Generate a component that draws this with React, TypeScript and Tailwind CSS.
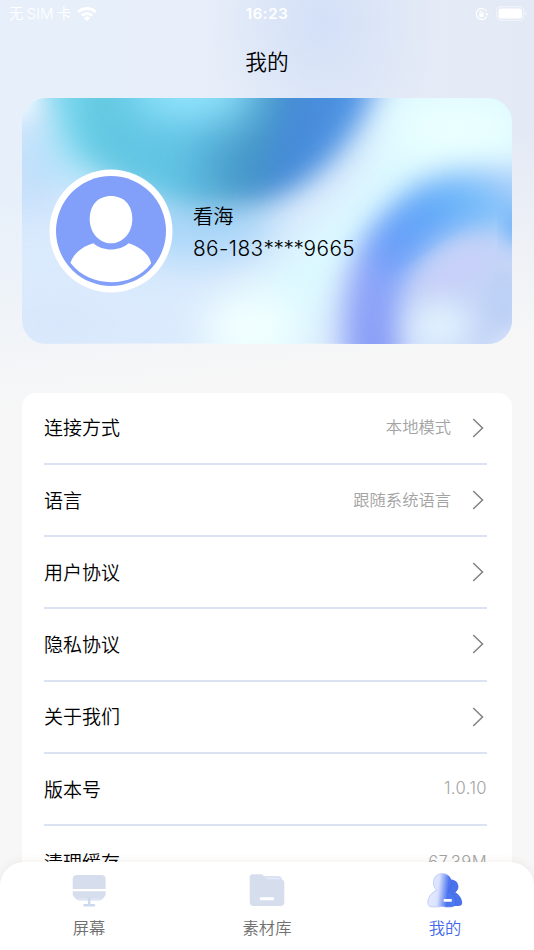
import type { ReactNode } from "react";

type Row = { label: string; value?: string; arrow?: boolean };

const rows: Row[] = [
  { label: "连接方式", value: "本地模式", arrow: true },
  { label: "语言", value: "跟随系统语言", arrow: true },
  { label: "用户协议", arrow: true },
  { label: "隐私协议", arrow: true },
  { label: "关于我们", arrow: true },
  { label: "版本号", value: "1.0.10" },
  { label: "清理缓存", value: "67.39M" },
];

function StatusBar() {
  return (
    <div className="grid h-7 grid-cols-3 items-center pr-[7px] pl-[9px] text-[15px] leading-7 text-white">
      <div className="flex items-center font-[350]">
        <span className="text-[14.5px]">无</span>
        <span className="ml-[3px] tracking-[0.1px]">SIM</span>
        <span className="ml-[3px] text-[14.5px]">卡</span>
        <svg className="ml-[6px] h-[15px] w-5" viewBox="0 0 20 15" fill="none" stroke="currentColor">
          <path d="M1.2 5a12.6 12.6 0 0 1 17.6 0" strokeWidth="3" />
          <path d="M4.7 8.6a7.7 7.7 0 0 1 10.6 0" strokeWidth="2.8" />
          <path d="M6.9 11a4.5 4.5 0 0 1 6.2 0L10 14.2Z" fill="currentColor" stroke="none" />
        </svg>
      </div>
      <span className="mr-[2px] text-center text-[15px] font-semibold tracking-[0.6px]">16:23</span>
      <div className="flex items-center justify-end gap-[7px]">
        <svg className="h-[14px] w-[14px]" viewBox="0 0 14 14" fill="none" stroke="currentColor">
          <path d="M11.7 9.5A5.5 5.5 0 1 1 11.6 4.2" strokeWidth="1.2" />
          <path d="m9.8 6.2 4.1.1-2 2.8Z" fill="currentColor" stroke="none" />
          <rect x="4.2" y="6.2" width="4.5" height="3.8" rx=".7" fill="currentColor" stroke="none" />
          <path d="M5.1 6.3V5a1.35 1.35 0 0 1 2.7 0v1.3" strokeWidth="1" />
        </svg>
        <svg className="mb-px h-[15px] w-[31px]" viewBox="0 0 31 15">
          <rect x=".7" y=".7" width="27" height="13.6" rx="4" fill="none" stroke="white" strokeOpacity=".45" strokeWidth="1.2" />
          <rect x="2.5" y="2.5" width="23.5" height="10" rx="2.2" fill="white" />
          <path d="M29 5v5c1.9-.7 1.9-4.3 0-5Z" fill="white" opacity=".5" />
        </svg>
      </div>
    </div>
  );
}

function CardArt() {
  return (
    <svg className="absolute inset-0 h-full w-full" viewBox="0 0 490 245" preserveAspectRatio="none">
      <defs>
        <filter id="b10" x="-50%" y="-50%" width="200%" height="200%" colorInterpolationFilters="sRGB"><feGaussianBlur stdDeviation="10" /></filter>
        <filter id="b14" x="-50%" y="-50%" width="200%" height="200%" colorInterpolationFilters="sRGB"><feGaussianBlur stdDeviation="14" /></filter>
        <filter id="b20" x="-100%" y="-100%" width="300%" height="300%" colorInterpolationFilters="sRGB"><feGaussianBlur stdDeviation="20" /></filter>
        <linearGradient id="disc" gradientUnits="userSpaceOnUse" x1="30" y1="5" x2="335" y2="65">
          <stop offset="0" stopColor="#7cdaf0" />
          <stop offset=".15" stopColor="#64c9e2" />
          <stop offset=".42" stopColor="#62c4e5" />
          <stop offset=".66" stopColor="#4a9ccb" />
          <stop offset=".78" stopColor="#468bd8" />
          <stop offset="1" stopColor="#559aea" />
        </linearGradient>
        <linearGradient id="ring" gradientUnits="userSpaceOnUse" x1="345" y1="235" x2="485" y2="85">
          <stop offset="0" stopColor="#8a9ff6" />
          <stop offset=".2" stopColor="#8fa5f8" />
          <stop offset=".4" stopColor="#689ef8" />
          <stop offset=".65" stopColor="#62a9f8" />
          <stop offset=".85" stopColor="#78befa" />
          <stop offset="1" stopColor="#a6cdfa" />
        </linearGradient>
      </defs>
      <rect width="490" height="245" fill="#dbebfd" />
      <ellipse cx="5" cy="75" rx="40" ry="45" fill="#c5dffb" filter="url(#b20)" />
      <ellipse cx="60" cy="45" rx="38" ry="38" fill="#9fe2f8" filter="url(#b20)" />
      <ellipse cx="175" cy="130" rx="80" ry="32" fill="#a8d5f8" filter="url(#b20)" />
      <ellipse cx="35" cy="225" rx="60" ry="22" fill="#d9e6fb" filter="url(#b20)" />
      <path d="M190 265 240 180 340 85 370-20 520-20 510 75 420 75 310 190 270 265Z" fill="#dcfaff" filter="url(#b20)" />
      <ellipse cx="228" cy="230" rx="48" ry="36" fill="#f2ffff" filter="url(#b20)" />
      <ellipse cx="435" cy="30" rx="65" ry="32" fill="#ebffff" filter="url(#b20)" />
      <ellipse cx="0" cy="0" rx="16" ry="18" fill="#eefbff" filter="url(#b10)" />
      <path d="M14-60C24 18 54 74 126 99C180 116 226 112 262 96C314 72 354 18 366-60Z" fill="url(#disc)" filter="url(#b14)" />
      <ellipse cx="171" cy="-6" rx="62" ry="27" fill="#96e7ff" filter="url(#b20)" />
      <path d="M225 96 270 55 320-5" fill="none" stroke="#4385d7" strokeWidth="22" opacity=".22" filter="url(#b14)" />
      <ellipse cx="222" cy="68" rx="34" ry="16" fill="#3c8abd" opacity=".22" filter="url(#b14)" />
      <ellipse cx="445" cy="188" rx="72" ry="80" fill="#c5d6f8" filter="url(#b14)" />
      <path d="M354 290C346 208 351 164 385 133C412 105 442 91 530 108" fill="none" stroke="url(#ring)" strokeWidth="58" filter="url(#b14)" />
      <ellipse cx="430" cy="176" rx="48" ry="16" fill="#c9cff9" transform="rotate(-32 430 176)" filter="url(#b14)" />
      <ellipse cx="418" cy="228" rx="30" ry="26" fill="#e1f0fd" filter="url(#b14)" />
      <ellipse cx="482" cy="200" rx="14" ry="30" fill="#bbcff4" filter="url(#b10)" />
      <ellipse cx="497" cy="130" rx="11" ry="16" fill="#5ca5f7" filter="url(#b10)" />
      <ellipse cx="492" cy="252" rx="18" ry="13" fill="#e6ebfa" filter="url(#b10)" />
    </svg>
  );
}

function Avatar() {
  return (
    <svg className="h-[124px] w-[124px] shrink-0" viewBox="0 0 124 124">
      <circle cx="62" cy="62" r="61.5" fill="white" />
      <circle cx="62" cy="62" r="55" fill="#829ff9" />
      <path d="M62 27c12.8 0 21.3 9 21.3 23.2C83.3 64 73.5 74.3 62 74.3S40.7 64 40.7 50.2C40.7 36 49.2 27 62 27Z" fill="white" />
      <path d="M44.5 74.2c8.8 8.3 26.2 8.3 35 0 12 3.8 21.3 11.8 22.6 20.2C83 119.5 41.5 119.5 21.5 94c2-8 11-16.6 23-19.8Z" fill="white" />
    </svg>
  );
}

function SettingRow({ row, last }: { row: Row; last: boolean }) {
  return (
    <div className={`flex h-[72.25px] items-center ${last ? "" : "border-b-2 border-[#dbe3f2]"}`}>
      <span className="flex-1 pt-[4px] text-[19px] font-[350] text-black">{row.label}</span>
      {row.value && (
        <span className={`text-[16.3px] font-[350] text-[#a3a3a3] ${row.arrow ? "" : "text-[16.6px] tracking-[0.4px]"}`}>{row.value}</span>
      )}
      {row.arrow && (
        <svg className="mr-[3px] ml-[21px] h-5 w-[12px]" viewBox="0 0 12 20" fill="none" stroke="#858585" strokeWidth="1.6">
          <path d="m1.2 1 9.3 9-9.3 9" />
        </svg>
      )}
    </div>
  );
}

function Tab({ label, active, children }: { label: string; active?: boolean; children: ReactNode }) {
  return (
    <div className={`flex flex-1 flex-col items-center pt-[10px] text-[16.3px] font-[350] ${active ? "text-[#4268ec]" : "text-[#707070]"}`}>
      <svg className="h-9 w-9" viewBox="0 0 36 36">{children}</svg>
      <span className="mt-[8px] leading-6">{label}</span>
    </div>
  );
}

function TabBar() {
  return (
    <nav className="absolute inset-x-0 bottom-0 flex h-[88px] rounded-t-[24px] bg-white shadow-[0_-1px_8px_rgba(120,60,40,0.08)]">
      <Tab label="屏幕">
        <path d="M1.7 17V7.2Q1.7 3 5.8 3H30.5q4.1 0 4.1 4.2V17Z" fill="#d6deee" />
        <path d="M1.7 19.3H34.6v3.2c0 1.5-4 6-6.3 6H8c-2.3 0-6.3-4.5-6.3-6Z" fill="#d6deee" />
        <path d="M7 27h9.5M20 27h9.5" stroke="#e9eef8" strokeWidth=".8" />
        <path d="M18.2 26.5V32M13.5 33.3H23" stroke="#cdd9ef" strokeWidth="2.5" strokeLinecap="round" />
      </Tab>
      <Tab label="素材库">
        <path d="M14 4h15.5q3.2 0 3.5 3.2V12H20Z" fill="#e4eafa" />
        <path d="M16 5h13q2.4 0 3 2.2" fill="none" stroke="#d1dbef" strokeWidth="1" />
        <path d="M.7 5.5Q.7 2.3 4 2.3h7.8c1.2 0 2 .5 2.8 1.4l2.6 2.7c.6.6 1.3.8 2.1.8h12.3q3.7 0 3.7 3.7v19q0 4-4 4H4.7q-4 0-4-4Z" fill="#d6deee" />
        <rect x="10.7" y="25.2" width="14.5" height="3" rx="1.2" fill="white" />
      </Tab>
      <Tab label="我的" active>
        <defs>
          <linearGradient id="person" x1="1" y1="19" x2="30" y2="22" gradientUnits="userSpaceOnUse">
            <stop offset="0" stopColor="#e5ebff" />
            <stop offset=".34" stopColor="#dae2ff" />
            <stop offset=".68" stopColor="#4c76f0" />
            <stop offset="1" stopColor="#507bf4" />
          </linearGradient>
        </defs>
        <path d="M22 7.3c5.6-.2 9.4 2.7 9.4 7.5 0 2.5-1.3 4.3-3 5.7 4 2 6.8 6.7 6.8 10.3 0 2.2-1.5 3.1-3.8 3.1H19Z" fill="#4a72eb" />
        <path d="M15.5 1.6c5.4 0 9.1 3.5 9.1 9 0 3.5-1.7 6.6-4.3 8 4.7 2 8.2 6.9 8.2 11.6 0 3.1-1.7 4.6-4.7 4.6H5.2c-3 0-4.3-1.4-4.3-4.4 0-5.2 3.5-10.1 9-12.1-2.2-1.7-3.4-4.5-3.4-7.6 0-5.5 3.7-9.1 9-9.1Z" fill="url(#person)" />
        <path d="M21.5 3.5C20 2.3 18 1.6 15.5 1.6c-5.3 0-9 3.6-9 9.1 0 3.1 1.2 5.9 3.4 7.6-5.5 2-9 6.9-9 12.1 0 3 1.3 4.4 4.3 4.4H13" fill="none" stroke="#bdcaf7" strokeWidth=".9" />
        <path d="M24.3 9c.8 4-1 7.9-4 9.6 4.7 2 8.2 6.9 8.2 11.6 0 3.1-1.7 4.6-4.7 4.6H18" fill="none" stroke="#4068e4" strokeWidth=".7" />
        <rect x="16.6" y="27.1" width="8.2" height="2.7" rx=".9" fill="white" />
      </Tab>
    </nav>
  );
}

export default function App() {
  return (
    <main className="relative h-[950px] w-[534px] overflow-hidden bg-[#f7f7f7] font-[Inter,'Noto_Sans_CJK_SC',sans-serif]">
      <div className="absolute inset-x-0 top-0 h-[420px] bg-[radial-gradient(ellipse_115px_150px_at_322px_22px,#d3e0f7_0%,#d3e0f700_100%),linear-gradient(172deg,#f7f7f700_40%,#f7f7f7_84%),linear-gradient(90deg,#e7f0fa_0%,#e7eef9_40%,#e3e9f5_100%)]" />
      <div className="relative">
        <StatusBar />
        <h1 className="flex h-[70px] items-center justify-center pb-[2px] text-[21.7px] font-[350] text-black">我的</h1>
        <section className="relative mx-[22px] flex h-[245.5px] items-center overflow-hidden rounded-[24px]">
          <CardArt />
          <div className="relative mt-5 ml-[27px] flex items-center gap-[20px]">
            <Avatar />
            <div className="pt-[4px] text-[20.3px] leading-[32px] font-[350] text-black">
              <p>看海</p>
              <p className="text-[20.8px] tracking-[0.4px]">
                86-183<span className="tracking-[-0.4px]">****</span>9665
              </p>
            </div>
          </div>
        </section>
        <section className="mx-[22px] mt-[49px] h-[570px] rounded-[14px] bg-white pr-[25px] pl-[22px]">
          {rows.map((row, i) => (
            <SettingRow key={row.label} row={row} last={i === rows.length - 1} />
          ))}
        </section>
      </div>
      <TabBar />
    </main>
  );
}
